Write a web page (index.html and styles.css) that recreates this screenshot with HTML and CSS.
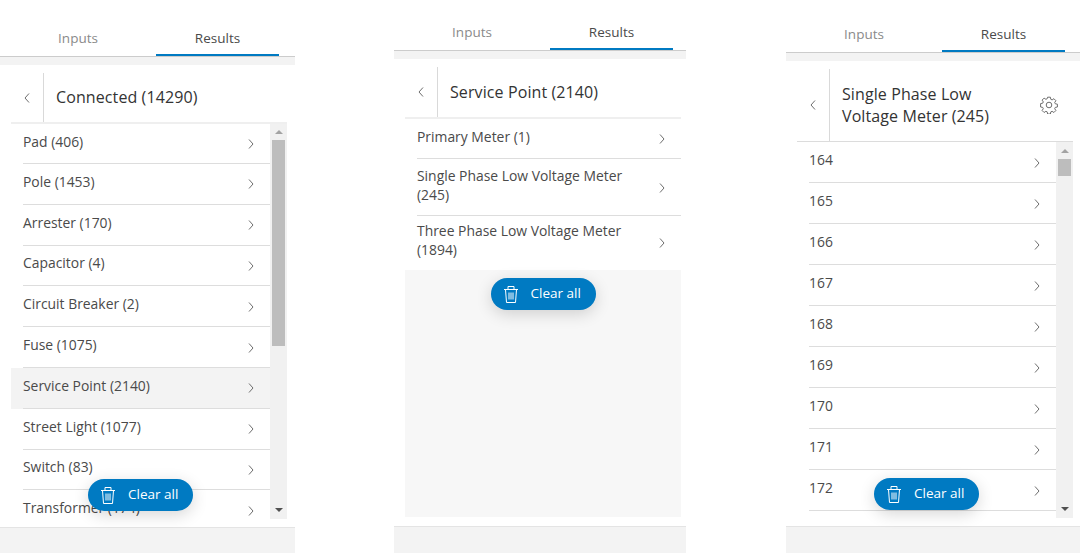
FILE: index.html
```html
<!DOCTYPE html>
<html lang="en">
<head>
  <meta charset="UTF-8">
  <title>Trace Results</title>
  <link rel="stylesheet" href="styles.css">
</head>
<body>
  <div class="page">

    <!-- Connected -->
    <section class="panel panel-connected">
      <div class="tabs">
        <div class="tab">Inputs</div>
        <div class="tab active">Results</div>
      </div>
      <div class="band"></div>
      <div class="main">
        <div class="header">
          <div class="back"><svg class="chev" viewBox="0 0 8 12"><path d="M6 1.5 2 6l4 4.5"/></svg></div>
          <div class="title">Connected (14290)</div>
        </div>
        <div class="list-wrap">
          <ul class="list">
            <li><span>Pad (406)</span><svg class="chev" viewBox="0 0 8 12"><path d="M2 1.5 6 6l-4 4.5"/></svg></li>
            <li><span>Pole (1453)</span><svg class="chev" viewBox="0 0 8 12"><path d="M2 1.5 6 6l-4 4.5"/></svg></li>
            <li><span>Arrester (170)</span><svg class="chev" viewBox="0 0 8 12"><path d="M2 1.5 6 6l-4 4.5"/></svg></li>
            <li><span>Capacitor (4)</span><svg class="chev" viewBox="0 0 8 12"><path d="M2 1.5 6 6l-4 4.5"/></svg></li>
            <li><span>Circuit Breaker (2)</span><svg class="chev" viewBox="0 0 8 12"><path d="M2 1.5 6 6l-4 4.5"/></svg></li>
            <li><span>Fuse (1075)</span><svg class="chev" viewBox="0 0 8 12"><path d="M2 1.5 6 6l-4 4.5"/></svg></li>
            <li class="hover"><span>Service Point (2140)</span><svg class="chev" viewBox="0 0 8 12"><path d="M2 1.5 6 6l-4 4.5"/></svg></li>
            <li><span>Street Light (1077)</span><svg class="chev" viewBox="0 0 8 12"><path d="M2 1.5 6 6l-4 4.5"/></svg></li>
            <li><span>Switch (83)</span><svg class="chev" viewBox="0 0 8 12"><path d="M2 1.5 6 6l-4 4.5"/></svg></li>
            <li><span>Transformer (174)</span><svg class="chev" viewBox="0 0 8 12"><path d="M2 1.5 6 6l-4 4.5"/></svg></li>
          </ul>
          <div class="scrollbar">
            <div class="arrow-up"></div>
            <div class="thumb thumb-long"></div>
            <div class="arrow-down"></div>
          </div>
          <div class="clear-float">
            <button class="clear-btn">
              <svg class="trash" viewBox="0 0 14 17"><path d="M0 3.5h14M4 3.5V.5h6v3M1.5 3.5l1 13h9l1-13M5 6.5v7M7 6.5v7M9 6.5v7"/></svg>
              <span class="clear-label">Clear all</span>
            </button>
          </div>
        </div>
      </div>
      <div class="footer"></div>
    </section>

    <!-- Service Point -->
    <section class="panel panel-service">
      <div class="tabs">
        <div class="tab">Inputs</div>
        <div class="tab active">Results</div>
      </div>
      <div class="band"></div>
      <div class="main main-grey">
        <div class="header">
          <div class="back"><svg class="chev" viewBox="0 0 8 12"><path d="M6 1.5 2 6l4 4.5"/></svg></div>
          <div class="title">Service Point (2140)</div>
        </div>
        <ul class="list">
          <li><span>Primary Meter (1)</span><svg class="chev" viewBox="0 0 8 12"><path d="M2 1.5 6 6l-4 4.5"/></svg></li>
          <li class="tall"><span>Single Phase Low Voltage Meter (245)</span><svg class="chev" viewBox="0 0 8 12"><path d="M2 1.5 6 6l-4 4.5"/></svg></li>
          <li class="tall last"><span>Three Phase Low Voltage Meter (1894)</span><svg class="chev" viewBox="0 0 8 12"><path d="M2 1.5 6 6l-4 4.5"/></svg></li>
        </ul>
        <button class="clear-btn in-flow">
          <svg class="trash" viewBox="0 0 14 17"><path d="M0 3.5h14M4 3.5V.5h6v3M1.5 3.5l1 13h9l1-13M5 6.5v7M7 6.5v7M9 6.5v7"/></svg>
          <span class="clear-label">Clear all</span>
        </button>
      </div>
      <div class="footer"></div>
    </section>

    <!-- Single Phase Low Voltage Meter -->
    <section class="panel panel-meter">
      <div class="tabs">
        <div class="tab">Inputs</div>
        <div class="tab active">Results</div>
      </div>
      <div class="band"></div>
      <div class="main">
        <div class="header">
          <div class="back"><svg class="chev" viewBox="0 0 8 12"><path d="M6 1.5 2 6l4 4.5"/></svg></div>
          <div class="title">Single Phase Low Voltage Meter (245)</div>
          <svg class="gear" viewBox="0 0 18 18">
            <path d="M7.6 1.2h2.8l.4 2.1 1.3.6 1.8-1.2 2 2-1.2 1.8.6 1.3 2.1.4v2.8l-2.1.4-.6 1.3 1.2 1.8-2 2-1.8-1.2-1.3.6-.4 2.1H7.6l-.4-2.1-1.3-.6-1.8 1.2-2-2 1.2-1.8-.6-1.3-2.1-.4V7.6l2.1-.4.6-1.3-1.2-1.8 2-2 1.8 1.2 1.3-.6z"/>
            <circle cx="9" cy="9" r="2.8"/>
          </svg>
        </div>
        <div class="list-wrap">
          <ul class="list">
            <li><span>164</span><svg class="chev" viewBox="0 0 8 12"><path d="M2 1.5 6 6l-4 4.5"/></svg></li>
            <li><span>165</span><svg class="chev" viewBox="0 0 8 12"><path d="M2 1.5 6 6l-4 4.5"/></svg></li>
            <li><span>166</span><svg class="chev" viewBox="0 0 8 12"><path d="M2 1.5 6 6l-4 4.5"/></svg></li>
            <li><span>167</span><svg class="chev" viewBox="0 0 8 12"><path d="M2 1.5 6 6l-4 4.5"/></svg></li>
            <li><span>168</span><svg class="chev" viewBox="0 0 8 12"><path d="M2 1.5 6 6l-4 4.5"/></svg></li>
            <li><span>169</span><svg class="chev" viewBox="0 0 8 12"><path d="M2 1.5 6 6l-4 4.5"/></svg></li>
            <li><span>170</span><svg class="chev" viewBox="0 0 8 12"><path d="M2 1.5 6 6l-4 4.5"/></svg></li>
            <li><span>171</span><svg class="chev" viewBox="0 0 8 12"><path d="M2 1.5 6 6l-4 4.5"/></svg></li>
            <li><span>172</span><svg class="chev" viewBox="0 0 8 12"><path d="M2 1.5 6 6l-4 4.5"/></svg></li>
          </ul>
          <div class="scrollbar">
            <div class="arrow-up"></div>
            <div class="thumb thumb-short"></div>
            <div class="arrow-down"></div>
          </div>
          <div class="clear-float">
            <button class="clear-btn">
              <svg class="trash" viewBox="0 0 14 17"><path d="M0 3.5h14M4 3.5V.5h6v3M1.5 3.5l1 13h9l1-13M5 6.5v7M7 6.5v7M9 6.5v7"/></svg>
              <span class="clear-label">Clear all</span>
            </button>
          </div>
        </div>
      </div>
      <div class="footer"></div>
    </section>

  </div>
</body>
</html>
```

FILE: styles.css
```css
html, body {
  margin: 0;
  padding: 0;
  height: 100%;
  background: #fff;
  font-family: "Open Sans", Arial, sans-serif;
  color: #4a4a4a;
  overflow: hidden;
}
.page {
  display: flex;
  height: 553px;
}
.panel {
  display: flex;
  flex-direction: column;
  box-sizing: border-box;
  height: 553px;
}
.panel-connected {
  width: 295px;
  padding-top: 20px;
  margin-right: 99px;
}
.panel-service {
  width: 292px;
  padding-top: 14px;
  margin-right: 100px;
}
.panel-meter {
  width: 294px;
  padding-top: 16px;
}

/* Tabs */
.tabs {
  display: flex;
  height: 37px;
  box-sizing: border-box;
  border-bottom: 1px solid #ccc;
}
.tab {
  width: 156px;
  height: 36px;
  line-height: 36px;
  text-align: center;
  font-size: 13.5px;
  color: #8a8a8a;
  box-sizing: border-box;
}
.tab.active {
  width: 123px;
  color: #4a4a4a;
  border-bottom: 2px solid #007ac2;
}
.band {
  height: 8px;
  flex-shrink: 0;
  background: #f3f3f3;
}
.footer {
  height: 26px;
  flex-shrink: 0;
  box-sizing: border-box;
  background: #f3f3f3;
  border-top: 1px solid #e4e4e4;
}
.panel-service .footer,
.panel-meter .footer {
  height: 27px;
}

/* Main column */
.main {
  flex: 1;
  width: 276px;
  margin: 0 0 8px 11px;
  display: flex;
  flex-direction: column;
  min-height: 0;
  background: #fff;
}
.main-grey {
  background: #f7f7f7;
  margin-bottom: 9px;
}
.header {
  display: flex;
  align-items: center;
  flex-shrink: 0;
  box-sizing: border-box;
  background: #fff;
  border-bottom: 2px solid #efefef;
  height: 59px;
  font-size: 16px;
}
.panel-service .header {
  height: 60px;
}
.panel-meter .header {
  height: 81px;
  border-bottom: 1px solid #dcdcdc;
}
.back {
  width: 33px;
  margin-top: 8px;
  align-self: stretch;
  box-sizing: border-box;
  border-right: 1px solid #d9d9d9;
  display: flex;
  align-items: center;
  justify-content: center;
  flex-shrink: 0;
}
.title {
  flex: 1;
  padding: 7px 0 0 12px;
  line-height: 22px;
  letter-spacing: 0.1px;
  color: #333;
}
.panel-meter .title {
  padding-right: 30px;
}
.chev {
  width: 8px;
  height: 12px;
  flex-shrink: 0;
  fill: none;
  stroke: #6e6e6e;
  stroke-width: 1;
}
.gear {
  width: 18px;
  height: 18px;
  margin: 7px 15px 0 0;
  fill: none;
  stroke: #6e6e6e;
  stroke-width: 1;
  stroke-linejoin: round;
}

/* List */
.list-wrap {
  flex: 1;
  display: flex;
  position: relative;
  min-height: 0;
}
.list {
  list-style: none;
  margin: 0;
  padding: 0;
  flex: 1;
  overflow: hidden;
  background: #fff;
}
.list li {
  display: flex;
  align-items: center;
  justify-content: space-between;
  box-sizing: border-box;
  height: 41px;
  padding: 0 15px 0 12px;
  font-size: 13.9px;
  line-height: 19px;
  background-image: linear-gradient(#ddd, #ddd);
  background-size: calc(100% - 12px) 1px;
  background-position: 12px 100%;
  background-repeat: no-repeat;
}
.list li span {
  margin-top: -6px;
}
.panel-connected .list li {
  height: 40.8px;
}
.panel-connected .list li:first-child,
.panel-service .list li:first-child {
  height: 40px;
}
.list li.hover {
  background-color: #f3f3f3;
}
.list li.tall {
  height: 57px;
}
.list li.last {
  height: 54px;
  background-image: none;
}
.panel-service .list {
  flex: none;
}
.panel-service .list li span {
  width: 225px;
}

/* Fake native scrollbar */
.scrollbar {
  width: 17px;
  flex-shrink: 0;
  background: #f1f1f1;
  display: flex;
  flex-direction: column;
  align-items: center;
}
.arrow-up {
  margin-top: 6px;
  border: 4px solid transparent;
  border-top: 0;
  border-bottom: 4px solid #a3a3a3;
}
.panel-meter .arrow-up {
  margin-top: 7px;
}
.arrow-down {
  margin-top: auto;
  margin-bottom: 7px;
  border: 4px solid transparent;
  border-bottom: 0;
  border-top: 4px solid #505050;
}
.thumb {
  width: 13px;
  margin-top: 6px;
  background: #bdbdbd;
}
.thumb-long {
  height: 206px;
}
.thumb-short {
  height: 17px;
}

/* Clear all button */
.clear-float {
  position: absolute;
  left: 0;
  right: 17px;
  bottom: 8px;
  display: flex;
  justify-content: center;
}
.clear-btn {
  display: flex;
  align-items: center;
  gap: 13px;
  width: 105px;
  height: 32px;
  box-sizing: border-box;
  padding: 0 0 0 13px;
  border: 0;
  border-radius: 16px;
  background: #007ac2;
  color: #fff;
  font-family: inherit;
  font-size: 13.5px;
  box-shadow: 0 4px 16px rgba(0,0,0,0.16);
}
.clear-btn.in-flow {
  align-self: center;
  margin-top: 8px;
}
.clear-label {
  margin-top: -2px;
}
.trash {
  width: 14px;
  height: 17px;
  flex-shrink: 0;
  fill: none;
  stroke: #fff;
  stroke-width: 1;
}
```
